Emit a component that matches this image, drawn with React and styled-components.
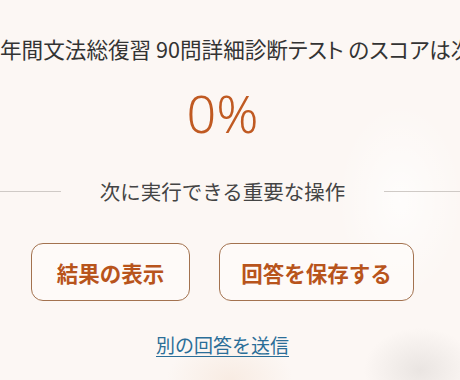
import React from "react";
import styled, { createGlobalStyle } from "styled-components";

const GlobalStyle = createGlobalStyle`
  html, body {
    margin: 0;
    padding: 0;
    background: #fcf7f4;
  }
  body {
    font-family: "Noto Sans CJK JP", "Noto Sans", sans-serif;
  }
`;

const Page = styled.div`
  position: relative;
  width: 460px;
  height: 380px;
  box-sizing: border-box;
  padding-right: 15px;
  overflow: hidden;
  background:
    radial-gradient(ellipse 90px 140px at 400px 200px, rgba(255, 255, 255, 0.7), transparent 70%),
    radial-gradient(ellipse 80px 60px at 420px 370px, rgba(200, 195, 192, 0.35), transparent 70%),
    radial-gradient(ellipse 90px 60px at 230px 380px, rgba(245, 228, 215, 0.6), transparent 70%),
    #fcf7f4;
  display: flex;
  flex-direction: column;
  align-items: center;
`;

const Heading = styled.h1`
  align-self: stretch;
  margin: 36px -15px 0 0;
  font-size: 21.6px;
  font-weight: 400;
  line-height: 26px;
  color: #333;
  white-space: nowrap;
  overflow: hidden;
  font-feature-settings: "palt";
`;

const Score = styled.div`
  margin-top: 21px;
  font-family: "Noto Sans", "Open Sans", sans-serif;
  font-size: 52px;
  font-weight: 300;
  line-height: 60px;
  color: #c05a22;
`;

const Divider = styled.div`
  align-self: stretch;
  margin: 34px -15px 0 0;
  display: grid;
  grid-template-columns: 61px 1fr 76px;
  align-items: center;

  &::before,
  &::after {
    content: "";
    height: 1px;
    background: #cfcac6;
  }
`;

const DividerLabel = styled.span`
  text-align: center;
  font-size: 20.5px;
  line-height: 28px;
  color: #444;
`;

const Actions = styled.div`
  margin-top: 38px;
  display: flex;
  gap: 29px;
`;

const ActionButton = styled.button`
  width: ${(p) => p.$w}px;
  height: 58px;
  border: 1px solid #a3724f;
  border-radius: 12px;
  background: rgba(255, 252, 250, 0.6);
  font-family: "Noto Sans CJK JP", sans-serif;
  font-size: 21.5px;
  font-weight: 700;
  color: #b8541c;
  cursor: pointer;
`;

const Link = styled.a`
  margin-top: 31px;
  font-size: 19px;
  line-height: 26px;
  color: #2b6e98;
  text-decoration: underline;
  text-underline-offset: 3px;
  cursor: pointer;
`;

export default function App() {
  return (
    <>
      <GlobalStyle />
      <Page>
        <Heading>年間文法総復習 90問詳細診断テスト のスコアは次のとおりです</Heading>
        <Score>0%</Score>
        <Divider>
          <DividerLabel>次に実行できる重要な操作</DividerLabel>
        </Divider>
        <Actions>
          <ActionButton $w={159}>結果の表示</ActionButton>
          <ActionButton $w={195}>回答を保存する</ActionButton>
        </Actions>
        <Link>別の回答を送信</Link>
      </Page>
    </>
  );
}
